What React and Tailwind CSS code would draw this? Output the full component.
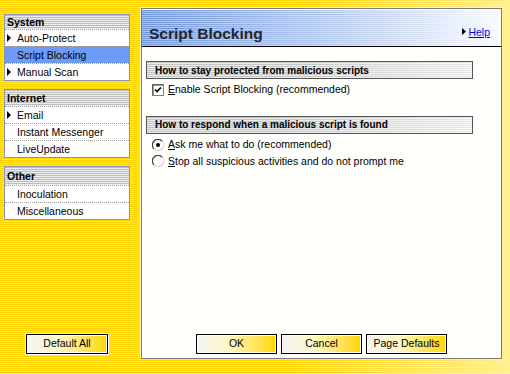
const FONT = "font-['Liberation_Sans',Arial,sans-serif]";

const NAV = [
  {
    name: 'System',
    header: 'h-[14px]',
    items: [
      { name: 'Auto-Protect', arrow: true },
      { name: 'Script Blocking', active: true },
      { name: 'Manual Scan', arrow: true },
    ],
  },
  {
    name: 'Internet',
    header: 'h-[16px]',
    items: [
      { name: 'Email', arrow: true },
      { name: 'Instant Messenger' },
      { name: 'LiveUpdate' },
    ],
  },
  {
    name: 'Other',
    header: 'h-[18px]',
    items: [{ name: 'Inoculation' }, { name: 'Miscellaneous' }],
  },
];

function Arrow() {
  return (
    <svg width="4" height="8" viewBox="0 0 4 8" className="shrink-0">
      <path d="M0 0L4 4L0 8Z" fill="#000" />
    </svg>
  );
}

function NavBox({ box }) {
  return (
    <div className="border border-[#8a94b8] bg-white">
      <div
        className={`${box.header} flex items-center px-[2px] text-[10.5px] font-bold leading-none text-black bg-[image:repeating-linear-gradient(to_bottom,#bdbdbd_0px,#bdbdbd_1px,#ededed_1px,#ededed_2px)]`}
      >
        {box.name}
      </div>
      {box.items.map((item) => (
        <div
          key={item.name}
          className={`flex h-[17px] items-center border-t border-dotted border-[#a0a0a0] pl-[2px] text-[10.5px] leading-none ${
            item.active ? 'bg-[#6b9bf5] text-black' : 'text-black'
          }`}
        >
          <span className="flex w-[9px] justify-start">{item.arrow && <Arrow />}</span>
          <span className="pl-[1px]">{item.name}</span>
        </div>
      ))}
    </div>
  );
}

function YellowButton({ children, className = '' }) {
  return (
    <button
      className={`flex h-[20px] items-center justify-center border border-black text-[10.5px] text-black shadow-[inset_1px_1px_0_#fff,inset_-1px_-1px_0_#fff] bg-[image:linear-gradient(to_right,#f4f4f4_0%,#fff8c8_40%,#ffe14a_80%,#ffd800_100%)] ${className}`}
    >
      {children}
    </button>
  );
}

function SectionHeader({ children }) {
  return (
    <div className="flex h-[18px] items-center border border-[#555] pl-[8px] text-[10px] font-bold text-black bg-[image:linear-gradient(to_right,rgba(255,255,255,0)_40%,rgba(255,255,255,0.6)_100%),repeating-linear-gradient(to_bottom,#c6c6c6_0px,#c6c6c6_1px,#eaeaea_1px,#eaeaea_2px)]">
      {children}
    </div>
  );
}

function CheckBox() {
  return (
    <svg width="12" height="12" viewBox="0 0 12 12" className="shrink-0">
      <rect x="0.5" y="0.5" width="11" height="11" fill="#fff" stroke="#808080" />
      <path d="M1 11V1H11" fill="none" stroke="#404040" />
      <path d="M3 5.5L5 7.5L9 3.5" fill="none" stroke="#000" strokeWidth="1.6" />
    </svg>
  );
}

function Radio({ checked }) {
  return (
    <svg width="12" height="12" viewBox="0 0 12 12" className="shrink-0">
      <circle cx="6" cy="6" r="5.5" fill="#fff" />
      <path d="M10 2A5.5 5.5 0 0 0 2 10" fill="none" stroke="#404040" strokeWidth="1.2" />
      <path d="M2 10A5.5 5.5 0 0 0 10 2" fill="none" stroke="#d8d8d8" strokeWidth="1.2" />
      {checked && <circle cx="6" cy="6" r="2" fill="#000" />}
    </svg>
  );
}

export default function App() {
  return (
    <div
      className={`${FONT} flex h-[374px] w-[510px] overflow-hidden bg-[image:linear-gradient(to_right,rgba(255,255,255,0)_55%,rgba(255,255,255,0.55)_100%),repeating-linear-gradient(to_bottom,#ffd400_0px,#ffd400_1px,#ffe650_1px,#ffe650_2px)]`}
    >
      {/* Sidebar */}
      <div className="flex w-[141px] flex-col pl-[4px] pr-[11px] pt-[14px]">
        <div className="flex flex-col gap-[8px]">
          {NAV.map((box) => (
            <NavBox key={box.name} box={box} />
          ))}
        </div>
        <div className="mt-auto mb-[20px] flex justify-center">
          <YellowButton className="w-[82px] outline outline-1 outline-white">Default All</YellowButton>
        </div>
      </div>

      {/* Main panel */}
      <div className="mb-[15px] mt-[8px] flex w-[361px] flex-col border border-[#7a7a7a] bg-[#fffffc] shadow-[-1px_-1px_0_#fff8c0]">
        <div className="mt-[1px] flex h-[37px] items-end justify-between border-b border-black px-[7px] pb-[5px] bg-[image:linear-gradient(to_right,rgba(255,255,255,0)_0%,rgba(255,255,255,0.45)_50%,rgba(255,255,255,0.95)_100%),repeating-linear-gradient(to_bottom,#7096dc_0px,#7096dc_1px,#a9c1f0_1px,#a9c1f0_2px)]">
          <span className="text-[15.5px] font-bold leading-none text-[#262626]">Script Blocking</span>
          <a href="#" className="mb-[4px] mr-[4px] flex items-center gap-[2px] text-[10.5px] leading-none text-[#0000ee] underline">
            <svg width="4" height="7" viewBox="0 0 4 7">
              <path d="M0 0L4 3.5L0 7Z" fill="#000" />
            </svg>
            Help
          </a>
        </div>

        <div className="flex flex-col px-[4px] pr-[28px] pt-[14px]">
          <SectionHeader>How to stay protected from malicious scripts</SectionHeader>
          <label className="mt-[3px] flex items-center gap-[4px] pl-[6px] text-[10.5px] text-black">
            <CheckBox />
            <span>
              <span className="underline">E</span>nable Script Blocking (recommended)
            </span>
          </label>

          <div className="mt-[18px]">
            <SectionHeader>How to respond when a malicious script is found</SectionHeader>
          </div>
          <label className="mt-[3px] flex items-center gap-[4px] pl-[6px] text-[10.5px] text-black">
            <Radio checked />
            <span>
              <span className="underline">A</span>sk me what to do (recommended)
            </span>
          </label>
          <label className="mt-[1px] flex items-center gap-[4px] pl-[6px] text-[10.5px] text-black">
            <Radio />
            <span>
              <span className="underline">S</span>top all suspicious activities and do not prompt me
            </span>
          </label>
        </div>

        <div className="mt-auto mb-[4px] flex justify-center gap-[4px]">
          <YellowButton className="h-[19px] w-[81px]">OK</YellowButton>
          <YellowButton className="h-[19px] w-[81px]">Cancel</YellowButton>
          <YellowButton className="h-[19px] w-[81px]">Page Defaults</YellowButton>
        </div>
      </div>
    </div>
  );
}
